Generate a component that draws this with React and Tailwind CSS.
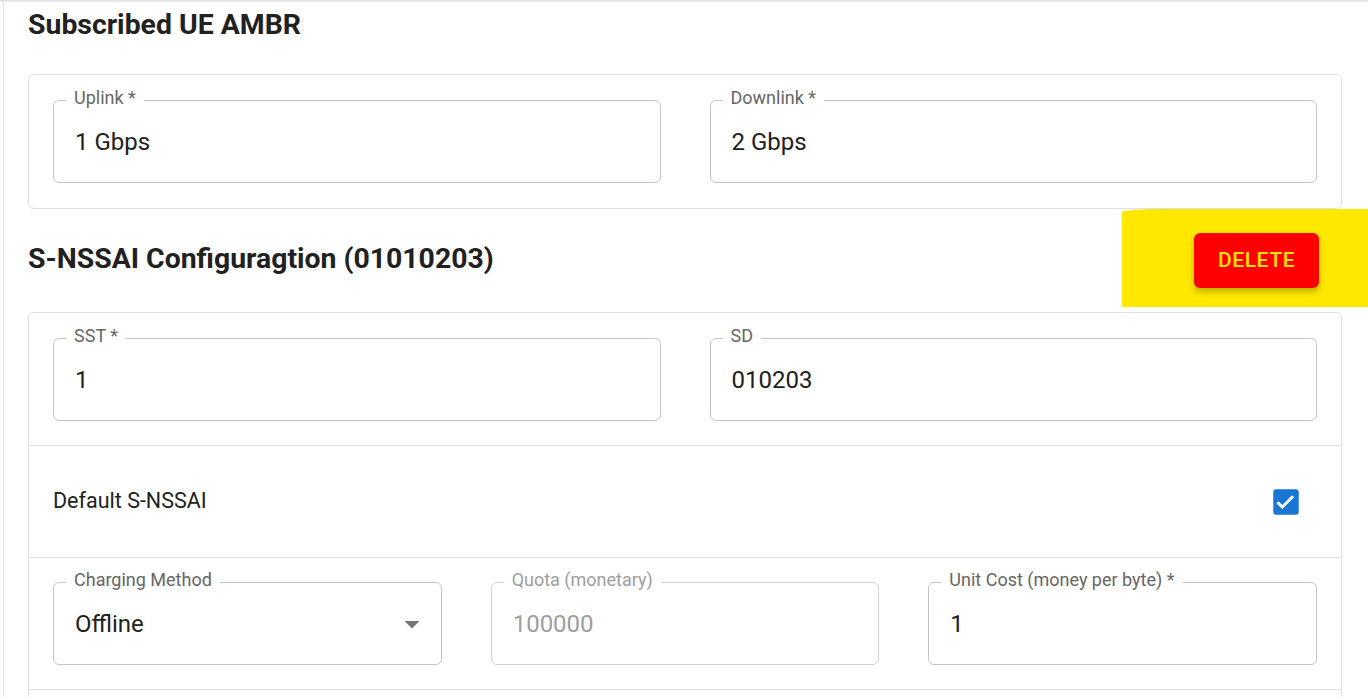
import React from "react";

const Field = ({ label, value, disabled, select }) => {
  return (
    <fieldset
      className={`min-w-0 rounded-[6px] border px-[12px] pt-[19px] pb-[28px] ${
        disabled ? "border-[#d0d0d0]" : "border-[#c4c4c4]"
      }`}
    >
      <legend
        className={`px-[8px] pb-[4px] text-[18px] leading-[18px] ${disabled ? "text-[#9e9e9e]" : "text-[#666666]"}`}
      >
        {label}
      </legend>
      <div className="flex items-center justify-between pl-[9px]">
        <span className={`text-[24px] leading-[24px] ${disabled ? "text-[#9e9e9e]" : "text-[#212121]"}`}>{value}</span>
        {select && (
          <svg className="-mr-[1px] h-[36px] w-[36px] -my-[6px] text-[#757575]" viewBox="0 0 24 24" fill="currentColor">
            <path d="M7 10l5 5 5-5z" />
          </svg>
        )}
      </div>
    </fieldset>
  );
};

export default function App() {
  return (
    <div className="min-h-screen bg-white font-['Roboto','Liberation_Sans',sans-serif] text-[#212121]">
      <div className="h-[3px] bg-gradient-to-b from-[#dcdcdc] to-white" />
      <div className="ml-[3px] -mt-[3px] border-l border-[#e3e3e3] pl-[24px] pr-[26px]">
        <div className="flex h-[50px] items-center">
          <h2 className="text-[28.4px] leading-[32px] font-bold">Subscribed UE AMBR</h2>
        </div>

        <div className="mt-[24px] rounded-[6px] border border-[#e0e0e0] px-[24px] pt-[14px] pb-[25px]">
          <div className="grid grid-cols-2 gap-x-[49px]">
            <Field label="Uplink *" value="1 Gbps" />
            <Field label="Downlink *" value="2 Gbps" />
          </div>
        </div>

        <div className="mt-[24px] flex h-[55px] items-center justify-between">
          <h2 className="pb-[4px] text-[28.4px] leading-[32px] font-bold">S-NSSAI Configuragtion (01010203)</h2>
          <div className="-mr-[26px] -mt-[24px] h-[98px] w-[246px] self-start rounded-tl-[40px_3px] bg-[#ffe800] pt-[24px] pl-[72px]">
            <button className="h-[55px] w-[125px] rounded-[6px] bg-[#ff0000] text-[21px] font-medium tracking-[0.6px] text-[#ffe000] shadow-[0_4px_6px_rgba(120,110,0,0.45)]">
              DELETE
            </button>
          </div>
        </div>

        <div className="mt-[24px] rounded-t-[6px] border border-[#e0e0e0]">
          <div className="px-[24px] pt-[14px] pb-[24px]">
            <div className="grid grid-cols-2 gap-x-[49px]">
              <Field label="SST *" value="1" />
              <Field label="SD" value="010203" />
            </div>
          </div>
          <div className="flex h-[112px] items-center justify-between border-t border-[#e0e0e0] pl-[24px] pr-[37px]">
            <span className="text-[21.5px] text-[#212121]">Default S-NSSAI</span>
            <svg className="h-[36px] w-[36px] text-[#1976d2]" viewBox="0 0 24 24">
              <rect x="3.5" y="3.5" width="17" height="17" rx="2" fill="currentColor" />
              <path d="M6.3 12.2l3.2 3.2 7.2-7.2" fill="none" stroke="white" strokeWidth="1.9" />
            </svg>
          </div>
          <div className="border-t border-[#e0e0e0] px-[24px] pt-[13px] pb-[24px]">
            <div className="grid grid-cols-3 gap-x-[49px]">
              <Field label="Charging Method" value="Offline" select />
              <Field label="Quota (monetary)" value="100000" disabled />
              <Field label="Unit Cost (money per byte) *" value="1" />
            </div>
          </div>
          <div className="h-[100px] border-t border-[#e0e0e0]" />
        </div>
      </div>
    </div>
  );
}
